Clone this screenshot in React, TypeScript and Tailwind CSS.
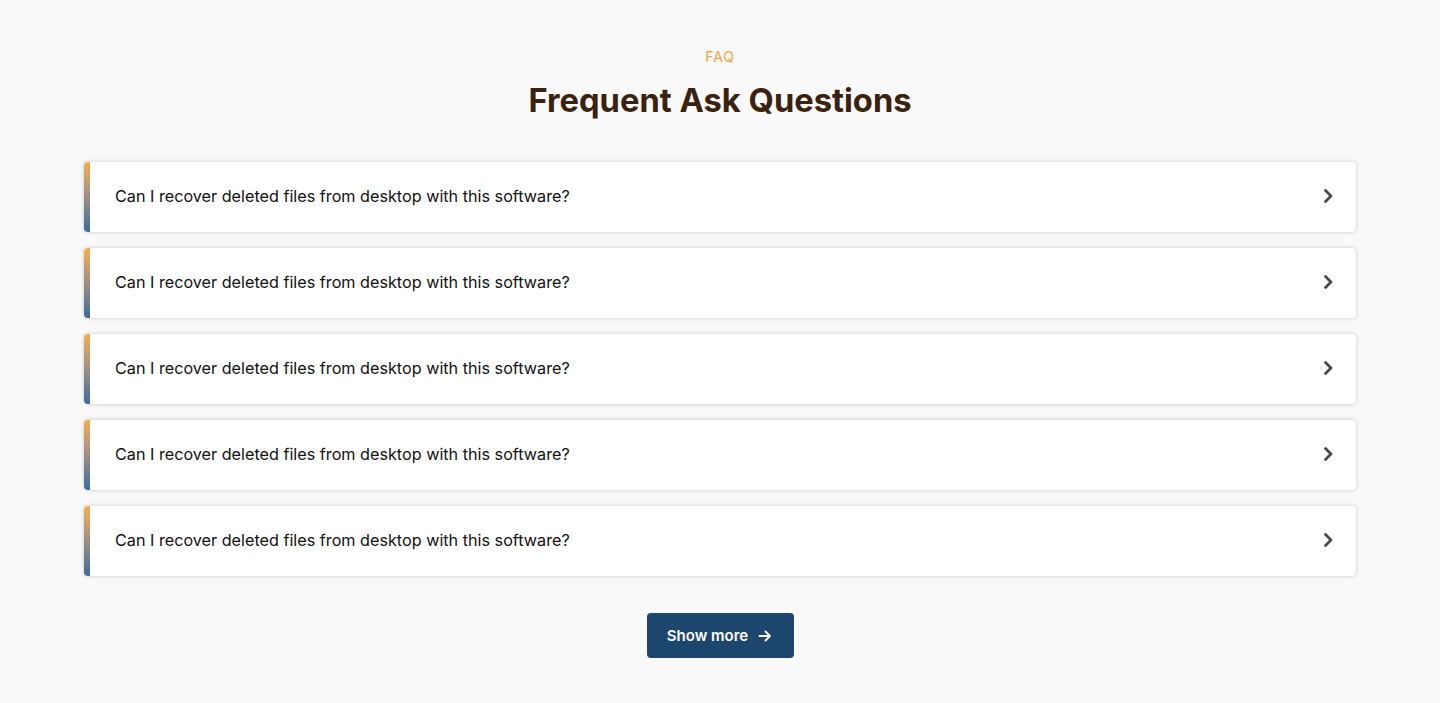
import React from "react";

const q = "Can I recover deleted files from desktop with this software?";

export default function App() {
  return (
    <div className="min-h-[703px] w-full bg-[#f9f9f9] pt-[48px] pb-[44px]" style={{ fontFamily: "Inter, 'Noto Sans', sans-serif" }}>
      <div className="flex flex-col items-center">
        <p className="text-[14px] leading-[18px] tracking-[0.06em] text-[#f3a338]">FAQ</p>
        <h1 className="mt-[16px] text-[32.7px] leading-[36px] font-bold text-[#3b220c]">Frequent Ask Questions</h1>
      </div>
      <div className="mx-[84px] mt-[44px] flex flex-col gap-[16px]">
        {[0, 1, 2, 3, 4].map((i) => (
          <div key={i} className="flex h-[70px] overflow-hidden rounded-[4px] bg-white shadow-[0_0_4px_rgba(0,0,0,0.2)]">
            <div className="w-[6px] shrink-0 bg-gradient-to-b from-[#f8ac4c] to-[#3b6a9b]" />
            <div className="flex flex-1 items-center justify-between pl-[25px] pr-[18px] pb-[2px]">
              <span className="text-[16.2px] text-[#111111]">{q}</span>
              <svg width="20" height="20" viewBox="0 0 20 20" fill="none">
                <path d="M7.5 4.5 L13 10 L7.5 15.5" stroke="#474747" strokeWidth="2.8" strokeLinecap="round" strokeLinejoin="round" />
              </svg>
            </div>
          </div>
        ))}
      </div>
      <div className="mt-[37px] flex justify-center">
        <button className="flex h-[45px] w-[147px] items-center justify-center gap-[9px] rounded-[4px] bg-[#1d466f] pt-[1px] text-[15px] font-semibold text-white">
          Show more
          <svg width="16" height="16" viewBox="0 0 16 16" fill="none">
            <path d="M2.5 8 H13 M8.5 3.5 L13 8 L8.5 12.5" stroke="white" strokeWidth="1.8" strokeLinecap="round" strokeLinejoin="round" />
          </svg>
        </button>
      </div>
    </div>
  );
}
